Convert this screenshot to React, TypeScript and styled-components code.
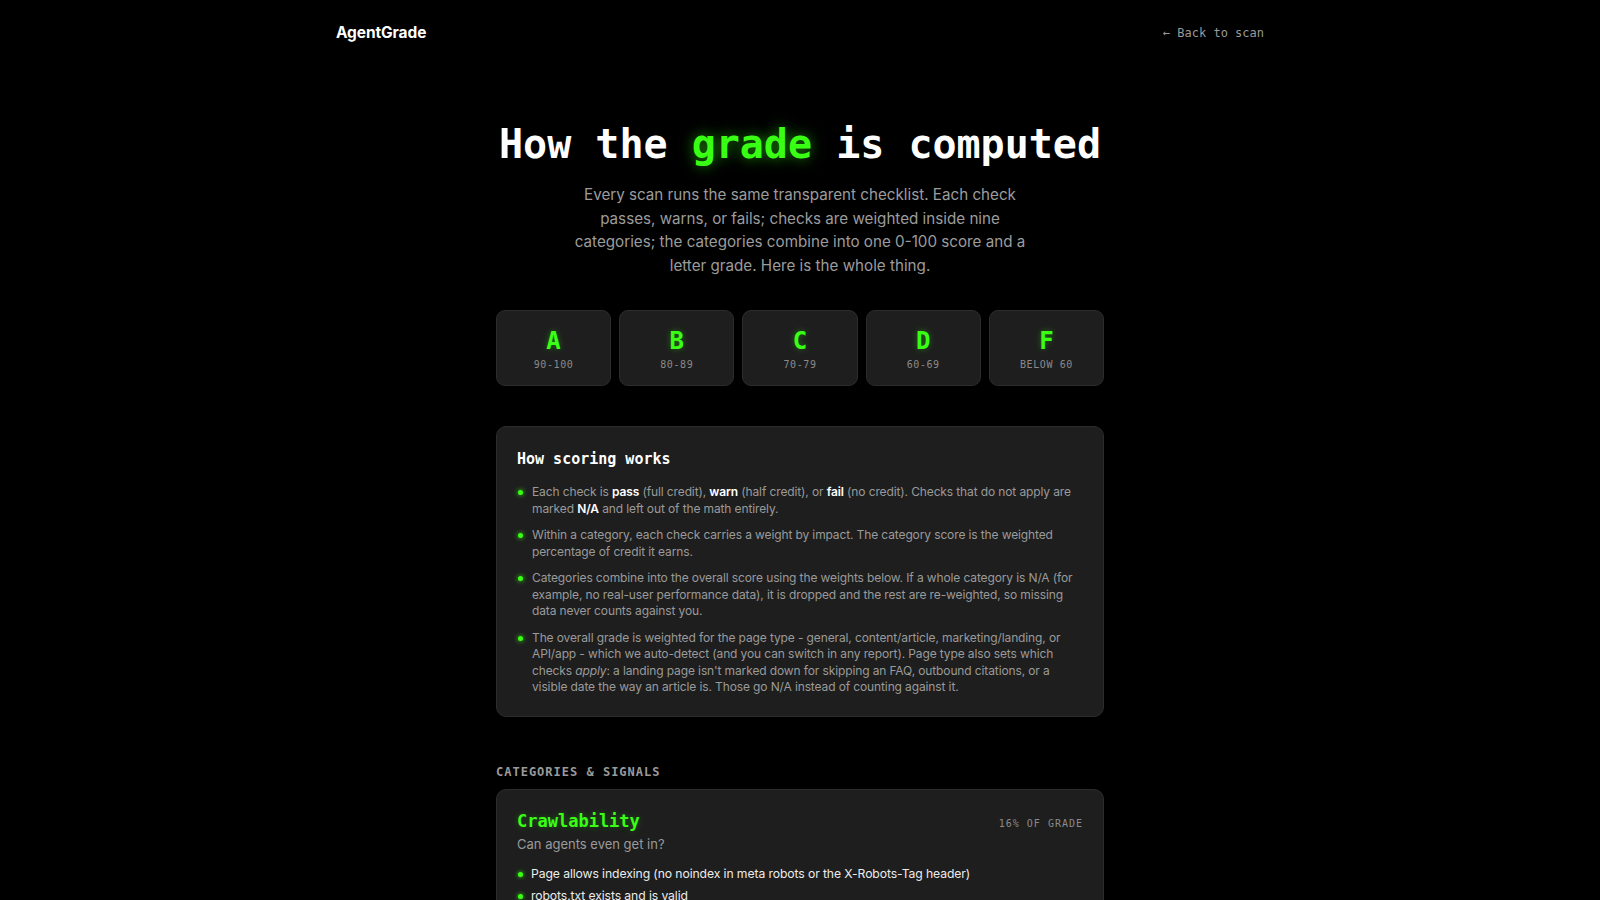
import styled, { createGlobalStyle } from 'styled-components';

const GREEN = '#39ff14';
const MONO = "'DejaVu Sans Mono', 'Liberation Mono', monospace";
const SANS = "Inter, 'Noto Sans', sans-serif";

const grades = [
  { letter: 'A', range: '90-100' },
  { letter: 'B', range: '80-89' },
  { letter: 'C', range: '70-79' },
  { letter: 'D', range: '60-69' },
  { letter: 'F', range: 'BELOW 60' },
];

const categories = [
  {
    name: 'Crawlability',
    weight: '16% OF GRADE',
    question: 'Can agents even get in?',
    checks: [
      'Page allows indexing (no noindex in meta robots or the X-Robots-Tag header)',
      'robots.txt exists and is valid',
      'AI crawlers are not blocked in robots.txt',
      'sitemap.xml is reachable and referenced',
      'Page responds with a 200 status without redirects chains',
    ],
  },
  {
    name: 'Content structure',
    weight: '14% OF GRADE',
    question: 'Can agents make sense of what they read?',
    checks: [
      'Exactly one H1 that describes the page',
      'Headings follow a logical order',
      'Main content is in semantic landmarks',
    ],
  },
];

const App = () => {
  return (
    <>
      <GlobalStyle />
      <Page>
        <Header>
          <Logo>AgentGrade</Logo>
          <BackLink href="#">← Back to scan</BackLink>
        </Header>

        <Main>
          <Title>
            How the <Glow>grade</Glow> is computed
          </Title>
          <Intro>
            Every scan runs the same transparent checklist. Each check passes, warns, or fails;
            checks are weighted inside nine categories; the categories combine into one 0-100
            score and a letter grade. Here is the whole thing.
          </Intro>

          <GradeRow>
            {grades.map((g) => (
              <GradeCard key={g.letter}>
                <GradeLetter>{g.letter}</GradeLetter>
                <GradeRange>{g.range}</GradeRange>
              </GradeCard>
            ))}
          </GradeRow>

          <Panel>
            <PanelTitle>How scoring works</PanelTitle>
            <BulletList>
              <Bullet>
                Each check is <b>pass</b> (full credit), <b>warn</b> (half credit), or <b>fail</b>{' '}
                (no credit). Checks that do not apply are marked <b>N/A</b> and left out of the
                math entirely.
              </Bullet>
              <Bullet>
                Within a category, each check carries a weight by impact. The category score is
                the weighted percentage of credit it earns.
              </Bullet>
              <Bullet>
                Categories combine into the overall score using the weights below. If a whole
                category is N/A (for example, no real-user performance data), it is dropped and
                the rest are re-weighted, so missing data never counts against you.
              </Bullet>
              <Bullet>
                The overall grade is weighted for the page type - general, content/article,
                marketing/landing, or API/app - which we auto-detect (and you can switch in any
                report). Page type also sets which checks <i>apply</i>: a landing page isn't marked
                down for skipping an FAQ, outbound citations, or a visible date the way an article
                is. Those go N/A instead of counting against it.
              </Bullet>
            </BulletList>
          </Panel>

          <SectionLabel>Categories &amp; signals</SectionLabel>
          <CategoryStack>
            {categories.map((c) => (
              <CategoryCard key={c.name}>
                <CategoryHead>
                  <CategoryName>{c.name}</CategoryName>
                  <CategoryWeight>{c.weight}</CategoryWeight>
                </CategoryHead>
                <CategoryQuestion>{c.question}</CategoryQuestion>
                <CheckList>
                  {c.checks.map((check) => (
                    <CheckItem key={check}>{check}</CheckItem>
                  ))}
                </CheckList>
              </CategoryCard>
            ))}
          </CategoryStack>
        </Main>
      </Page>
    </>
  );
};

const GlobalStyle = createGlobalStyle`
  html, body {
    margin: 0;
    padding: 0;
    background: #000;
    color: #f2f2f2;
    font-family: ${SANS};
  }
  * {
    box-sizing: border-box;
  }
`;

const Page = styled.div`
  min-height: 100vh;
  background: #000;
  padding-bottom: 80px;
`;

const Header = styled.header`
  max-width: 960px;
  margin: 0 auto;
  padding: 20px 16px 0;
  height: 45px;
  display: flex;
  align-items: center;
  justify-content: space-between;
`;

const Logo = styled.div`
  font-family: ${SANS};
  font-weight: 700;
  font-size: 15.5px;
  color: #fff;
  letter-spacing: -0.1px;
`;

const BackLink = styled.a`
  font-family: ${MONO};
  font-size: 12px;
  color: #9a9a9a;
  text-decoration: none;
`;

const Main = styled.main`
  width: 608px;
  margin: 0 auto;
  display: flex;
  flex-direction: column;
`;

const Title = styled.h1`
  margin: 77px 0 0;
  font-family: ${MONO};
  font-weight: 700;
  font-size: 40px;
  line-height: 44px;
  letter-spacing: 0;
  text-align: center;
  color: #fff;
`;

const Glow = styled.span`
  color: ${GREEN};
  text-shadow: 0 0 14px rgba(57, 255, 20, 0.55);
`;

const Intro = styled.p`
  margin: 17px auto 0;
  max-width: 470px;
  font-size: 15.2px;
  line-height: 23.5px;
  color: #9c9c9c;
  text-align: center;
`;

const GradeRow = styled.div`
  margin-top: 33px;
  display: grid;
  grid-template-columns: repeat(5, 1fr);
  gap: 8px;
`;

const GradeCard = styled.div`
  height: 76px;
  background: #1e1e1e;
  border: 1px solid #2c2c2c;
  border-radius: 9px;
  display: flex;
  flex-direction: column;
  align-items: center;
  padding-top: 16px;
`;

const GradeLetter = styled.div`
  font-family: ${MONO};
  font-weight: 700;
  font-size: 24px;
  line-height: 28px;
  color: ${GREEN};
  text-shadow: 0 0 6px rgba(57, 255, 20, 0.35);
`;

const GradeRange = styled.div`
  margin-top: 3px;
  font-family: ${MONO};
  font-size: 10px;
  line-height: 14px;
  letter-spacing: 0.6px;
  color: #8a8a8a;
`;

const Panel = styled.section`
  margin-top: 40px;
  background: #1e1e1e;
  border: 1px solid #2c2c2c;
  border-radius: 10px;
  padding: 21px 20px 20px;
`;

const PanelTitle = styled.h2`
  margin: 0;
  font-family: ${MONO};
  font-weight: 700;
  font-size: 15px;
  line-height: 22px;
  color: #fff;
`;

const BulletList = styled.ul`
  list-style: none;
  margin: 14px 0 0;
  padding: 0;
  display: flex;
  flex-direction: column;
  gap: 10px;
`;

const Bullet = styled.li`
  position: relative;
  padding-left: 15px;
  font-size: 12px;
  line-height: 16.5px;
  letter-spacing: -0.12px;
  color: #9a9a9a;

  &::before {
    content: '';
    position: absolute;
    left: 1px;
    top: 6px;
    width: 5px;
    height: 5px;
    border-radius: 50%;
    background: ${GREEN};
    box-shadow: 0 0 5px ${GREEN};
  }

  b {
    color: #fff;
    font-weight: 600;
  }
`;

const SectionLabel = styled.h3`
  margin: 47px 0 0;
  font-family: ${MONO};
  font-weight: 700;
  font-size: 12px;
  line-height: 17px;
  letter-spacing: 1px;
  text-transform: uppercase;
  color: #9a9a9a;
`;

const CategoryStack = styled.div`
  margin-top: 8px;
  display: flex;
  flex-direction: column;
  gap: 12px;
`;

const CategoryCard = styled.section`
  background: #1e1e1e;
  border: 1px solid #2c2c2c;
  border-radius: 10px;
  padding: 19px 20px 20px;
`;

const CategoryHead = styled.div`
  display: flex;
  align-items: baseline;
  justify-content: space-between;
`;

const CategoryName = styled.h4`
  margin: 0;
  font-family: ${MONO};
  font-weight: 700;
  font-size: 17px;
  line-height: 24px;
  color: ${GREEN};
  text-shadow: 0 0 6px rgba(57, 255, 20, 0.3);
`;

const CategoryWeight = styled.span`
  font-family: ${MONO};
  font-size: 10px;
  letter-spacing: 1px;
  color: #8a8a8a;
`;

const CategoryQuestion = styled.p`
  margin: 2px 0 0;
  font-size: 13px;
  line-height: 18px;
  color: #9a9a9a;
`;

const CheckList = styled.ul`
  list-style: none;
  margin: 12px 0 0;
  padding: 0;
  display: flex;
  flex-direction: column;
  gap: 4px;
`;

const CheckItem = styled.li`
  position: relative;
  padding-left: 14px;
  font-size: 12.2px;
  line-height: 18px;
  letter-spacing: -0.1px;
  color: #ececec;

  &::before {
    content: '';
    position: absolute;
    left: 1px;
    top: 7px;
    width: 5px;
    height: 5px;
    border-radius: 50%;
    background: ${GREEN};
    box-shadow: 0 0 4px ${GREEN};
  }
`;

export default App;
